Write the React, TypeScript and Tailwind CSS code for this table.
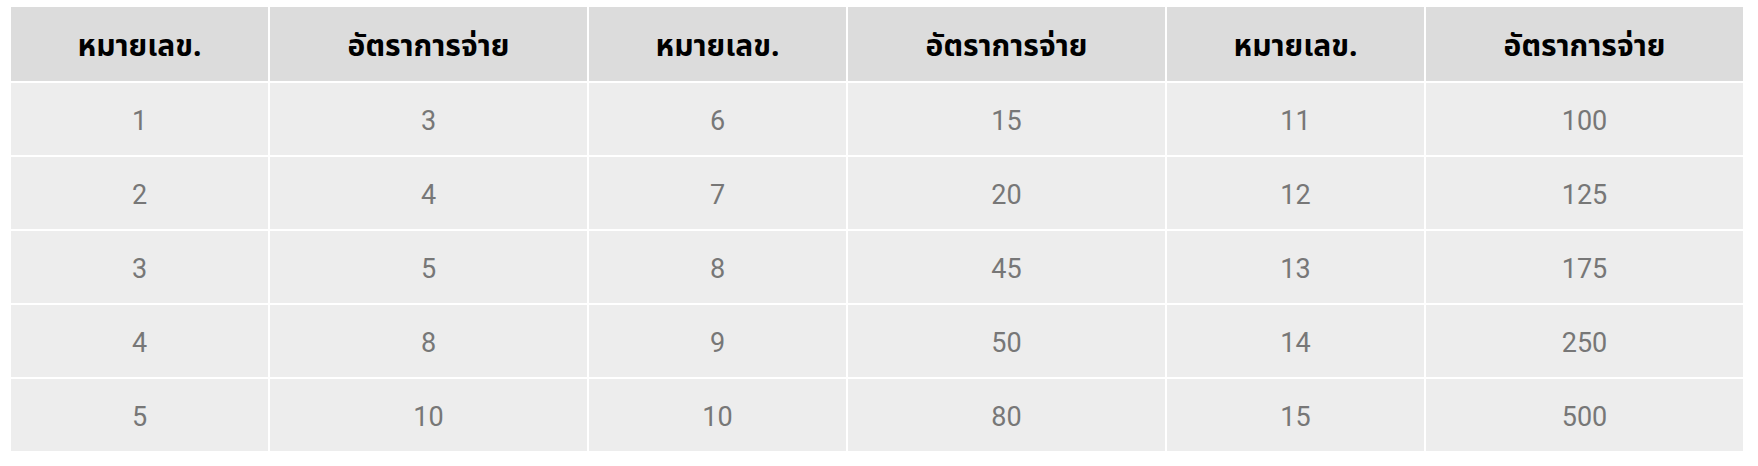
import React from "react";

const rows = [
  ["1", "3", "6", "15", "11", "100"],
  ["2", "4", "7", "20", "12", "125"],
  ["3", "5", "8", "45", "13", "175"],
  ["4", "8", "9", "50", "14", "250"],
  ["5", "10", "10", "80", "15", "500"],
];

const headers = ["หมายเลข.", "อัตราการจ่าย", "หมายเลข.", "อัตราการจ่าย", "หมายเลข.", "อัตราการจ่าย"];

export default function App() {
  return (
    <div className="w-[1758px] h-[466px] bg-white pl-[11px] pt-[7px]">
      <div className="grid w-[1732px] grid-cols-[257px_317px_257px_317px_257px_317px] grid-rows-[74px_repeat(5,72px)] gap-[2px]">
        {headers.map((h, i) => (
          <div
            key={"h" + i}
            className="flex items-center justify-center bg-[#dcdcdc] pt-[1px] text-[30px] font-bold text-black [font-family:'Noto_Sans','Noto_Sans_Thai',Tahoma,sans-serif]"
          >
            {h}
          </div>
        ))}
        {rows.map((r, ri) =>
          r.map((c, ci) => (
            <div
              key={ri + "-" + ci}
              className="flex items-center justify-center bg-[#ededed] pt-[4px] text-[27px] text-[#777777] [font-family:Roboto,'Noto_Sans',sans-serif]"
            >
              {c}
            </div>
          ))
        )}
      </div>
    </div>
  );
}
